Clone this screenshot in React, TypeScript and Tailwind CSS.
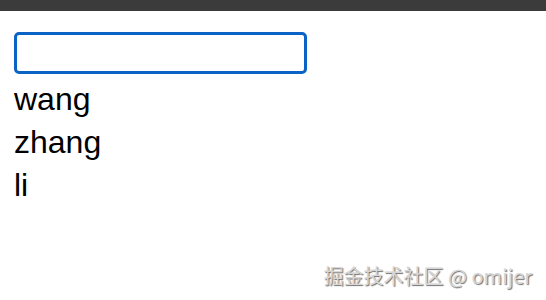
import { useState } from 'react';

const names = ['wang', 'zhang', 'li'];

export default function App() {
  const [query, setQuery] = useState('');

  const filtered = names.filter((n) => n.includes(query));

  return (
    <div className="relative w-[546px] h-[300px] bg-white overflow-hidden font-['Liberation_Sans',sans-serif] text-black">
      {/* window chrome strip */}
      <div className="h-[11px] bg-[#3b3b3b]" />

      <div className="px-[14px] pt-[21px]">
        <input
          value={query}
          onChange={(e) => setQuery(e.target.value)}
          className="block w-[293px] h-[42px] border-[3px] border-[#0b63c5] rounded-[5px] outline-none px-2 text-[16px]"
        />
        <ul className="mt-[4px] text-[32px] leading-[43px]">
          {filtered.map((name) => (
            <li key={name}>{name}</li>
          ))}
        </ul>
      </div>

      {/* watermark */}
      <div className="absolute right-[14px] bottom-[12px] text-[20px] leading-[24px] text-[#d6d6d6] font-['Noto_Sans_CJK_SC',sans-serif] [text-shadow:1px_1px_1px_#6f6f6f]">
        掘金技术社区 @ omijer
      </div>
    </div>
  );
}
